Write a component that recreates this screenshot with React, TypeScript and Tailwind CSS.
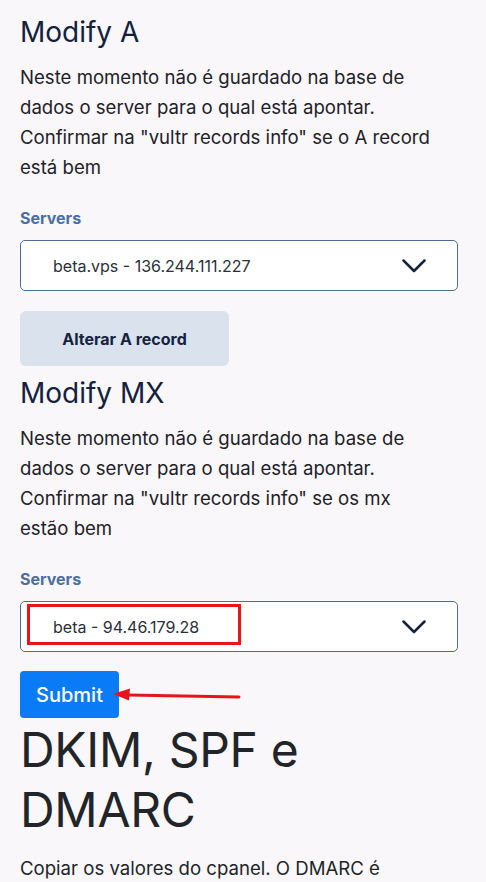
import React from "react";

const font = { fontFamily: "Inter, 'Noto Sans', sans-serif" };

function Chevron() {
  return (
    <svg width="24" height="14" viewBox="0 0 24 14" fill="none">
      <path d="M1.5 1.5 L12 12 L22.5 1.5" stroke="#14233f" strokeWidth="2.5" strokeLinecap="round" strokeLinejoin="round" />
    </svg>
  );
}

function Select({ value, highlight }: { value: string; highlight?: boolean }) {
  return (
    <div className="relative mt-[12px] flex h-[51px] w-[438px] items-center justify-between rounded-[5px] border border-[#4e6d95] bg-white pl-[32px] pr-[31px]">
      <span className="text-[16px] text-[#2a2f3a]">{value}</span>
      <Chevron />
      {highlight && (
        <div className="absolute left-[6px] top-[2px] h-[41px] w-[214px] border-[3px] border-[#e8141b]" />
      )}
    </div>
  );
}

function Section({ title, text, value, highlight }: { title: string; text: string; value: string; highlight?: boolean }) {
  return (
    <>
      <h2 className="h-[34px] text-[28px] leading-[34px] text-[#14213d]">{title}</h2>
      <p className="mt-[13px] w-[418px] text-[18.6px] leading-[30px] text-[#1f2129]">{text}</p>
      <div className="mt-[26px] h-[20px] text-[16px] font-bold leading-[20px] text-[#4b6ea3]">Servers</div>
      <Select value={value} highlight={highlight} />
    </>
  );
}

export default function App() {
  return (
    <div className="min-h-[882px] overflow-hidden bg-[#f9f7f9] pl-[20px] pt-[15px]" style={font}>
      <Section
        title="Modify A"
        text={'Neste momento não é guardado na base de dados o server para o qual está apontar. Confirmar na "vultr records info" se o A record está bem'}
        value="beta.vps - 136.244.111.227"
      />
      <button className="mt-[20px] h-[55px] w-[209px] rounded-[6px] bg-[#dae2ee] text-[16px] font-bold text-[#14233f]">
        Alterar A record
      </button>
      <div className="mt-[10px]">
        <Section
          title="Modify MX"
          text={'Neste momento não é guardado na base de dados o server para o qual está apontar. Confirmar na "vultr records info" se os mx estão bem'}
          value="beta - 94.46.179.28"
          highlight
        />
      </div>
      <div className="relative mt-[19px] flex items-center">
        <button className="h-[47px] w-[99px] rounded-[4px] bg-[#0a7bf6] text-[20px] font-medium text-white">Submit</button>
        <svg className="absolute left-[88px] top-[14px]" width="134" height="18" viewBox="0 0 134 18">
          <path d="M20 10 L131 12" stroke="#e8141b" strokeWidth="3" strokeLinecap="round" />
          <path d="M5 9 L22 3.5 L21 15.5 Z" fill="#e8141b" />
        </svg>
      </div>
      <h1 className="mt-[2px] w-[440px] text-[48px] leading-[60px] tracking-[-0.3px] text-[#212529]">DKIM, SPF e DMARC</h1>
      <p className="mt-[13px] text-[18.6px] leading-[30px] text-[#212529]">Copiar os valores do cpanel. O DMARC é</p>
    </div>
  );
}
